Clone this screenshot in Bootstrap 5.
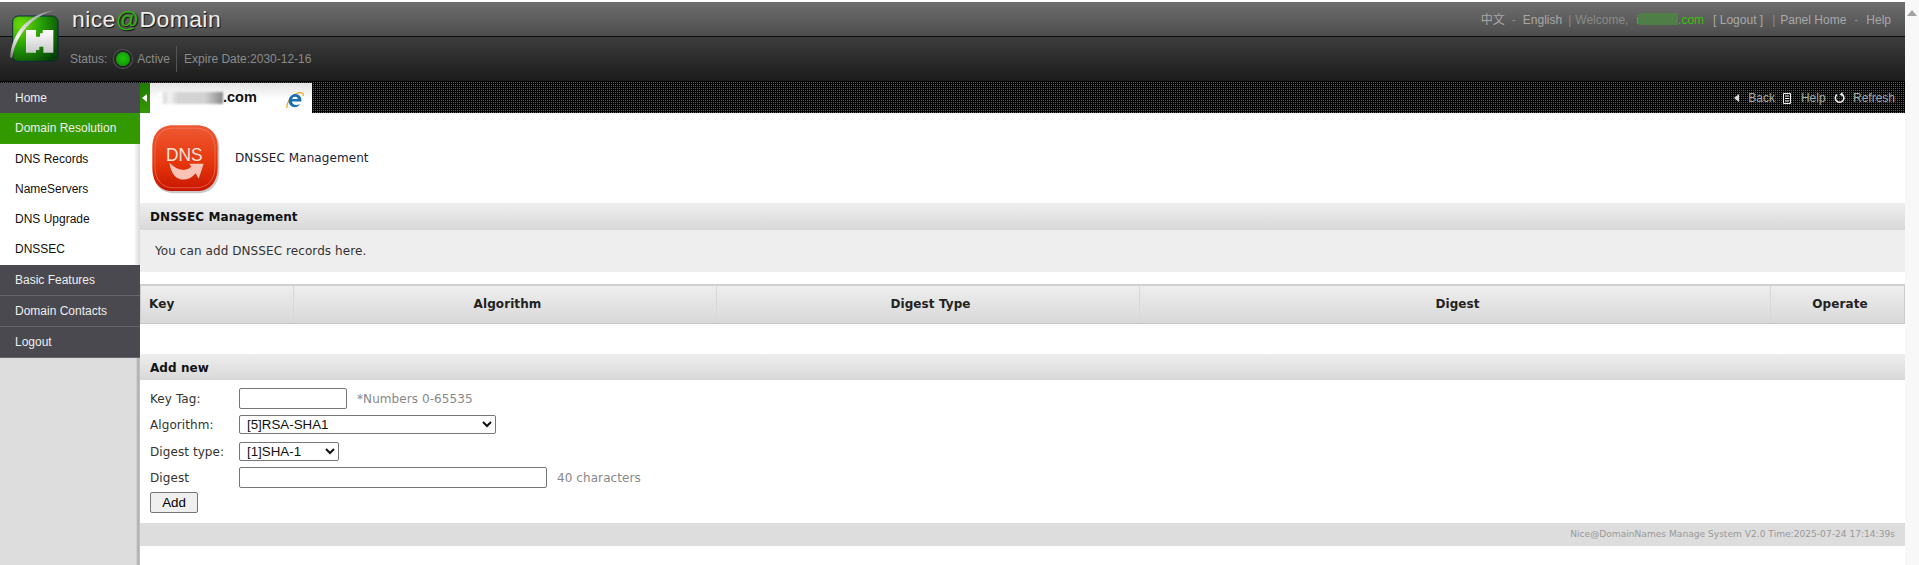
<!DOCTYPE html>
<html lang="en">
<head>
<meta charset="utf-8">
<title>nice@Domain</title>
<link href="https://cdn.jsdelivr.net/npm/bootstrap@5.3.0/dist/css/bootstrap.min.css" rel="stylesheet">
<style>
html,body{height:565px;overflow:hidden;background:#fff}
body{font-family:"Liberation Sans",Arial,sans-serif;font-size:12px;color:#222;padding-top:2px}
.shell{width:1905px;height:563px}
.sw-bar{width:14px;height:565px;margin-top:-2px;background:#f8f8f8;position:relative}
.sw-bar::after{content:"";position:absolute;left:2px;top:10px;border:5px solid transparent;border-top:0;border-bottom:6px solid #a3a3a3}
.top-one{height:35px;background:linear-gradient(#6e6e6e,#4d4d4d);border-bottom:1px solid #0c0c0c;padding:0 14px 0 72px}
.brand-txt{font-size:22.9px;line-height:34px;color:#eee;text-shadow:1px 1px 1px #111;letter-spacing:.45px}
.brand-txt b{font-weight:400;color:#2fb512}
.top-links{color:#a8a8a8;font-size:12px;line-height:34px;white-space:nowrap}
.top-links>span{margin-left:8px}
.top-links>span:first-child{margin-left:0;font-family:"Noto Sans CJK SC",sans-serif}
.top-links .dim{color:#8a8a8a}
.top-links .tight{margin-left:4px}
.top-links .grn{color:#35c20f}
.top-links .wide-w{margin-left:9px}
.top-links .gap-a{margin-left:7px}
.top-links .gap-b{margin-left:6px}
.top-links .gap-c{margin-left:9px}
.top-links .gap-d{margin-left:5px}
.mask-g{display:inline-block;width:39px;height:12px;background:#4f7f46;vertical-align:-1px}
.top-two{height:44px;background:linear-gradient(#3d3d3d,#1b1b1b);padding-left:70px;color:#8b8b8b;font-size:12px}
.dot-g{width:14px;height:14px;border-radius:50%;background:radial-gradient(circle at 50% 45%,#21c40c,#0a8a04);box-shadow:0 0 0 2px #222,0 0 0 3px #555;margin:0 7px 0 9px}
.sep-v{width:1px;height:26px;background:#555;margin:0 7px 0 6px}
.logo-pos{position:absolute;left:0;top:0}
.head-wrap{position:relative}
.strip-row{height:32px;background-color:#5a5a5a;background-image:linear-gradient(90deg,#050505 1px,transparent 1px),linear-gradient(#050505 1px,transparent 1px);background-size:2px 2px}
.lay-body{height:452px}
.side-col{width:140px;flex:0 0 140px;background:linear-gradient(90deg,#ddd 136px,#aaa 138px,#c8c8c8 140px);margin-top:-30px;height:482px;position:relative}
.side-lnk{display:block;height:31px;line-height:30px;padding-left:15px;color:#eee;background:#4a494f;border-bottom:1px solid #66656b;text-decoration:none;font-size:12px}
.side-lnk.first-lnk{height:30px;border-bottom:0}
.side-lnk.act{background:#339900;border-bottom-color:#3a9c0a;color:#eee;line-height:31px}
.side-sub{display:block;height:30px;line-height:31px;padding-left:15px;color:#111;background:linear-gradient(90deg,#fff 134px,#ddd 139px);text-decoration:none}
.side-sub.last-sub{height:31px}
.tab-arrow{width:10px;height:30px;background:linear-gradient(#1f7a00,#339900);position:relative;margin-left:140px;margin-top:2px}
.tab-arrow::after{content:"";position:absolute;left:2px;top:11px;border:4px solid transparent;border-left:0;border-right:5px solid #fff}
.tab-face{width:162px;height:30px;margin-top:2px;background:linear-gradient(#e4e4e4,#fff 55%);font-size:14.5px;font-weight:700;color:#111;padding-left:8px;position:relative}
.blur-box{display:inline-block;width:65px;height:12px;background:linear-gradient(90deg,#fff 5%,#ddd 10%,#f4f4f4 18%,#d4d4d4 30%,#d2d2d2 72%,#aaa 88%,#888);filter:blur(1.2px);vertical-align:-1px}
.ie-mark{position:absolute;left:135px;top:6px}
.strip-links{color:#a0a6ac;font-size:12px;gap:8px;padding-right:10px;line-height:32px;margin-top:2px;height:30px}
.tri-w{border:4px solid transparent;border-left:0;border-right:5px solid #ddd;display:inline-block;margin-right:9px}
.main-col{min-width:0}
.icon-row{height:90px;padding-left:10px}
.icon-row span,.note-bar,.frm-lab,.hint-g,.sec-head,.tbl-head{font-family:"DejaVu Sans",Verdana,sans-serif;font-size:12px;letter-spacing:.08px}
.icon-row span{margin-left:10px;color:#223}
.sec-head{height:26px;line-height:28px;font-weight:700;padding-left:10px;color:#111;background:linear-gradient(#eee,#d8d8d8)}
.sec-head.sec-first{height:27px}
.note-bar{height:42px;line-height:42px;padding-left:15px;background:#eee;color:#333}
.tbl-wrap{margin-top:12px;height:70px}
.tbl-head{margin:0;table-layout:fixed;width:100%;--bs-table-bg:transparent}
.tbl-head th{height:38px;padding:0 0 0 5px;text-align:center;vertical-align:middle;font-weight:700;color:#222;background:linear-gradient(#eee,#d8d8d8);border:0;border-top:2px solid #d0d0d0;border-bottom:1px solid #c6c6c6;border-left:1px solid #d8d8d8;box-shadow:none}
.tbl-head th:first-child{text-align:left;padding-left:8px;border-left:1px solid #ccc}
.tbl-head th:last-child{border-right:1px solid #ccc}
.frm-area{padding:8px 0 0 10px;height:143px}
.frm-line{margin-bottom:6px}
.frm-line.more-b{margin-bottom:8px}
.frm-line.less-b{margin-bottom:4px}
.frm-lab{width:89px;flex:0 0 89px;color:#333}
.hint-g{color:#888;margin-left:10px}
.inp-a,.sel-a{border:1px solid #767676;border-radius:2px;background:#fff;padding:0 3px;font-family:"Liberation Sans",Arial,sans-serif;font-size:13.33px;color:#111}
.inp-a{height:21px}
.sel-a{height:19px}
.add-btn{width:48px;height:21px;font-family:"Liberation Sans",Arial,sans-serif;font-size:13.33px;border:1px solid #767676;border-radius:2px;background:#efefef;color:#000;padding:0;display:block}
.foot-bar{height:23px;line-height:23px;background:#ddd;text-align:right;padding-right:10px;color:#999;font-family:"DejaVu Sans",Verdana,sans-serif;font-size:9.1px}
</style>
</head>
<body>
<div class="d-flex align-items-start">
<div class="shell flex-grow-0">
  <div class="head-wrap">
    <div class="top-one d-flex justify-content-between">
      <div class="brand-txt">nice<b>@</b>Domain</div>
      <div class="top-links"><span>中文</span><span class="dim gap-a">-</span><span class="gap-a">English</span><span class="dim gap-b">|</span><span class="dim tight">Welcome,</span><span class="grn">i<i class="mask-g"></i>.com</span><span class="wide-w">[ Logout ]</span><span class="dim gap-c">|</span><span class="gap-d">Panel Home</span><span class="dim">-</span><span>Help</span></div>
    </div>
    <div class="top-two d-flex align-items-center">
      <span>Status:</span><i class="dot-g"></i><span>Active</span><i class="sep-v"></i><span>Expire Date:2030-12-16</span>
    </div>
    <svg class="logo-pos" width="75" height="70" viewBox="0 0 225 210">
      <defs>
        <radialGradient id="lg" cx=".18" cy=".2" r="1"><stop offset="0" stop-color="#6cdc00"/><stop offset=".5" stop-color="#239a04"/><stop offset="1" stop-color="#064006"/></radialGradient>
        <linearGradient id="lh" x1="0" y1="0" x2="0" y2="1"><stop offset="0" stop-color="#fff"/><stop offset="1" stop-color="#c9c9c9"/></linearGradient>
        <linearGradient id="la" x1="0" y1="1" x2="1" y2="0"><stop offset="0" stop-color="#888"/><stop offset=".3" stop-color="#f4f4f4"/><stop offset="1" stop-color="#8a8a8a"/></linearGradient>
      </defs>
      <rect x="38" y="42" width="136" height="136" rx="17" fill="url(#lg)" stroke="#0b2a3a" stroke-width="3"/>
      <path d="M78 84H108V104H120V94H128V84H160V152H130V134H118V144H108V152H78Z" fill="url(#lh)"/>
      <path d="M31 166C33 98 82 34 165 25 102 40 50 92 36 168Z" fill="url(#la)"/>
    </svg>
  </div>
  <div class="strip-row d-flex align-items-start">
    <div class="tab-arrow"></div>
    <div class="tab-face d-flex align-items-center"><span class="blur-box"></span><span>.com</span>
      <svg class="ie-mark" width="20" height="22" viewBox="0 0 20 22">
        <path d="M2 19C1 15 6 6 13 4c4-1 6 0 5 3" fill="none" stroke="#e9a81c" stroke-width="1.3"/>
        <path d="M16.500 12.500H7c.2 3 4 4.500 8 2.500-.9 3-6.500 4.500-9.500 1.500C2.500 13.500 3 7.500 8 5.500c4.500-1.500 9 1.500 8.500 7zM7.200 10h5.600c-.2-3-5.200-3-5.600 0z" fill="#1e6fb4"/>
      </svg>
    </div>
    <div class="ms-auto strip-links d-flex align-items-center">
      <span class="d-flex align-items-center"><i class="tri-w"></i>Back</span>
      <span class="d-flex align-items-center"><svg width="8" height="11" viewBox="0 0 8 11"><path d="M.5.5h7v10h-7zM2 3h4M2 5.500h4M2 8h4" fill="none" stroke="#eee"/></svg>&nbsp;&nbsp;&nbsp;Help</span>
      <span class="d-flex align-items-center"><svg class="me-1" width="12" height="12" viewBox="0 0 12 12"><path d="M3 2.600A4.300 4.300 0 1 0 8 2.400" fill="none" stroke="#eee" stroke-width="1.600"/><path d="M8.600 0v4.400L5.600 2.400z" fill="#eee"/></svg>&nbsp;Refresh</span>
    </div>
  </div>
  <div class="lay-body d-flex">
    <nav class="side-col">
      <a class="side-lnk first-lnk" href="#">Home</a>
      <a class="side-lnk act" href="#">Domain Resolution</a>
      <a class="side-sub" href="#">DNS Records</a>
      <a class="side-sub" href="#">NameServers</a>
      <a class="side-sub" href="#">DNS Upgrade</a>
      <a class="side-sub last-sub" href="#">DNSSEC</a>
      <a class="side-lnk" href="#">Basic Features</a>
      <a class="side-lnk" href="#">Domain Contacts</a>
      <a class="side-lnk" href="#">Logout</a>
    </nav>
    <div class="main-col flex-grow-1">
      <div class="icon-row d-flex align-items-center">
        <svg width="75" height="75" viewBox="0 8 225 210" preserveAspectRatio="none">
          <defs>
            <linearGradient id="rd" x1="0" y1="0" x2="0" y2="1"><stop offset="0" stop-color="#ee5a34"/><stop offset=".55" stop-color="#e6380e"/><stop offset="1" stop-color="#c81600"/></linearGradient>
          </defs>
          <path d="M70 24h75c40 0 63 24 63 62v54c0 45-24 70-64 70H70c-40 0-60-26-60-68V86c0-38 22-62 60-62z" fill="#c9c9c9"/>
          <path d="M68 20h72c40 0 63 24 63 62v54c0 44-24 68-63 68H68c-40 0-61-25-61-66V82c0-38 23-62 61-62z" fill="url(#rd)"/>
          <path d="M70 28h68c34 0 57 21 57 56v50c0 39-22 61-57 61H70c-35 0-55-23-55-60V84c0-35 20-56 55-56z" fill="none" stroke="#f7917a" stroke-width="1.500"/>
          <text x="103" y="120" text-anchor="middle" font-family="Liberation Sans,sans-serif" font-size="52" fill="#fde3dc">DNS</text>
          <path transform="translate(-4 2)" d="M62 122Q78 140 105 143 118 143 128 134L122 126H165L150 168 141 152Q125 170 105 170 70 170 62 122Z" fill="#fbc3b5"/>
        </svg>
        <span>DNSSEC Management</span>
      </div>
      <div class="sec-head sec-first">DNSSEC Management</div>
      <div class="note-bar">You can add DNSSEC records here.</div>
      <div class="tbl-wrap">
        <table class="table tbl-head">
          <colgroup><col style="width:153px"><col style="width:423px"><col style="width:423px"><col style="width:631px"><col></colgroup>
          <thead><tr><th>Key</th><th>Algorithm</th><th>Digest Type</th><th>Digest</th><th>Operate</th></tr></thead>
        </table>
      </div>
      <div class="sec-head">Add new</div>
      <div class="frm-area">
        <div class="frm-line d-flex align-items-center"><label class="frm-lab">Key Tag:</label><input class="inp-a" style="width:108px" type="text"><span class="hint-g">*Numbers 0-65535</span></div>
        <div class="frm-line more-b d-flex align-items-center"><label class="frm-lab">Algorithm:</label><select class="sel-a" style="width:257px"><option>[5]RSA-SHA1</option></select></div>
        <div class="frm-line d-flex align-items-center"><label class="frm-lab">Digest type:</label><select class="sel-a" style="width:100px"><option>[1]SHA-1</option></select></div>
        <div class="frm-line less-b d-flex align-items-center"><label class="frm-lab">Digest</label><input class="inp-a" style="width:308px" type="text"><span class="hint-g">40 characters</span></div>
        <button class="add-btn" type="button">Add</button>
      </div>
      <div class="foot-bar">Nice@DomainNames Manage System V2.0 Time:2025-07-24 17:14:39s</div>
    </div>
  </div>
</div>
<div class="sw-bar"></div>
</div>
</body>
</html>
